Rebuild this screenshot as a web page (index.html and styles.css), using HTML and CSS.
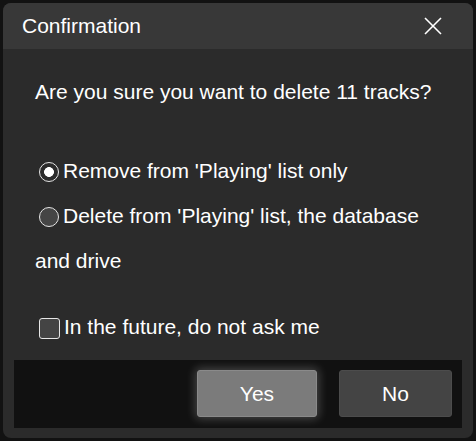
FILE: index.html
```html
<!DOCTYPE html>
<html>
<head>
<meta charset="utf-8">
<link rel="stylesheet" href="styles.css">
</head>
<body>
<div class="window">
  <div class="titlebar">
    <span class="title">Confirmation</span>
    <svg class="close" width="20" height="20" viewBox="0 0 20 20"><path d="M2 2 L18 18 M18 2 L2 18" stroke="#fff" stroke-width="1.6" fill="none"/></svg>
  </div>
  <div class="content">
    <div class="question">Are you sure you want to delete 11 tracks?</div>
    <div class="options">
      <label class="option"><input type="radio" name="mode" class="radio" checked>Remove from 'Playing' list only</label>
      <label class="option"><input type="radio" name="mode" class="radio">Delete from 'Playing' list, the database and drive</label>
    </div>
    <label class="option check-row"><input type="checkbox" class="check">In the future, do not ask me</label>
  </div>
  <div class="footer">
    <button class="btn btn-yes">Yes</button>
    <button class="btn btn-no">No</button>
  </div>
</div>
</body>
</html>
```
FILE: styles.css
```css
html, body {
  margin: 0;
  padding: 0;
}
body {
  background: #121212;
  width: 476px;
  height: 441px;
  padding: 3px;
  box-sizing: border-box;
  font-family: "Liberation Sans", Arial, sans-serif;
  color: #fff;
}
.window {
  height: 435px;
  border-radius: 8px;
  overflow: hidden;
  background: #2b2b2b;
  display: flex;
  flex-direction: column;
}
.titlebar {
  height: 46px;
  background: #383838;
  display: flex;
  align-items: center;
  justify-content: space-between;
  padding: 0 30px 0 19px;
  flex: none;
}
.title {
  font-size: 21px;
}
.close {
  display: block;
  margin-top: -1px;
}
.content {
  padding: 20px 32px 0 32px;
  font-size: 21px;
  line-height: 45px;
}
.question {
  margin-bottom: 34px;
}
.option {
  display: block;
}
.radio, .check {
  appearance: none;
  -webkit-appearance: none;
  margin: 0 4px 0 4px;
  width: 20px;
  height: 20px;
  box-sizing: border-box;
  border: 1.5px solid #e6e6e6;
  vertical-align: middle;
  position: relative;
  top: 0;
}
.radio {
  border-radius: 50%;
  background: #454545;
}
.radio:checked {
  background: radial-gradient(circle, #fff 0, #fff 4.6px, #2b2b2b 5.2px);
}
.check-row {
  margin-top: 21px;
}
.check {
  width: 21px;
  height: 21px;
  border-radius: 3px;
  background: #444;
}
.footer {
  margin: auto 11px 10px 11px;
  height: 68px;
  background: #111;
  display: flex;
  justify-content: flex-end;
  align-items: flex-start;
  gap: 22px;
  padding: 10px 10px 0 0;
  box-sizing: border-box;
  flex: none;
}
.btn {
  height: 47px;
  border-radius: 3px;
  font-family: "Liberation Sans", Arial, sans-serif;
  font-size: 21px;
  color: #fff;
  border: 1px solid #4c4c4c;
  padding: 0;
}
.btn-yes {
  width: 120px;
  background: #7b7b7b;
  border-color: #8a8a8a;
  box-shadow: 0 0 10px 2px rgba(255,255,255,0.22);
}
.btn-no {
  width: 113px;
  background: #444;
}
```
